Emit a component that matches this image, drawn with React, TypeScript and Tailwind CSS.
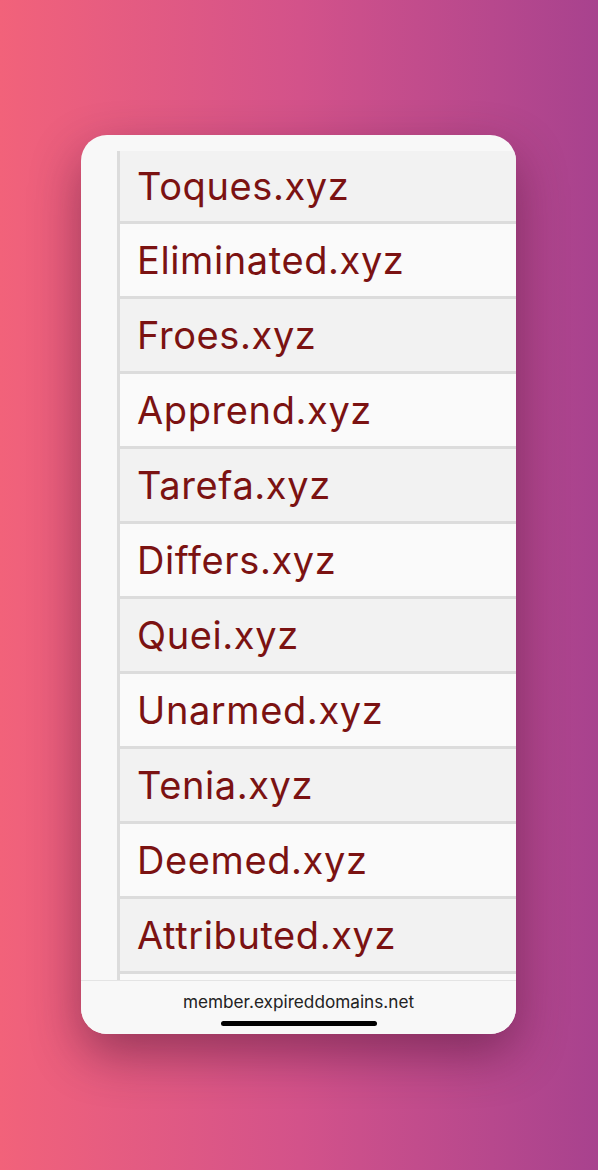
const domains = [
  "Toques.xyz",
  "Eliminated.xyz",
  "Froes.xyz",
  "Apprend.xyz",
  "Tarefa.xyz",
  "Differs.xyz",
  "Quei.xyz",
  "Unarmed.xyz",
  "Tenia.xyz",
  "Deemed.xyz",
  "Attributed.xyz",
  "",
];

export default function App() {
  return (
    <div className="min-h-[1170px] w-full bg-gradient-to-r from-[#f2627a] via-[#d3528a] to-[#a8428e] flex pl-[81px] pt-[135px] font-['Inter',sans-serif]">
      <div className="w-[435px] h-[899px] rounded-[26px] overflow-hidden bg-[#f8f8f8] flex flex-col shadow-[0_20px_50px_rgba(60,10,40,0.45)]">
        <div className="flex-1 overflow-hidden pt-[16px] pl-[36px]">
          <div className="border-l-[3px] border-[#dcdcdc] h-full">
            {domains.map((d, i) => (
              <div
                key={i}
                className={`flex items-center pl-[17px] border-b-[3px] border-[#dcdcdc] text-[#7b1212] text-[38px] tracking-[0.6px] ${
                  i === 0 ? "h-[73px]" : "h-[75px]"
                } ${i % 2 === 0 ? "bg-[#f2f2f2]" : "bg-[#fafafa]"}`}
              >
                {d}
              </div>
            ))}
          </div>
        </div>
        <div className="h-[54px] shrink-0 border-t border-[#e4e4e4] bg-[#f8f8f8] flex flex-col items-center pt-[10px]">
          <div className="text-[17.2px] leading-[22px] text-[#222]">member.expireddomains.net</div>
          <div className="mt-[8px] w-[156px] h-[5px] rounded-full bg-black" />
        </div>
      </div>
    </div>
  );
}
